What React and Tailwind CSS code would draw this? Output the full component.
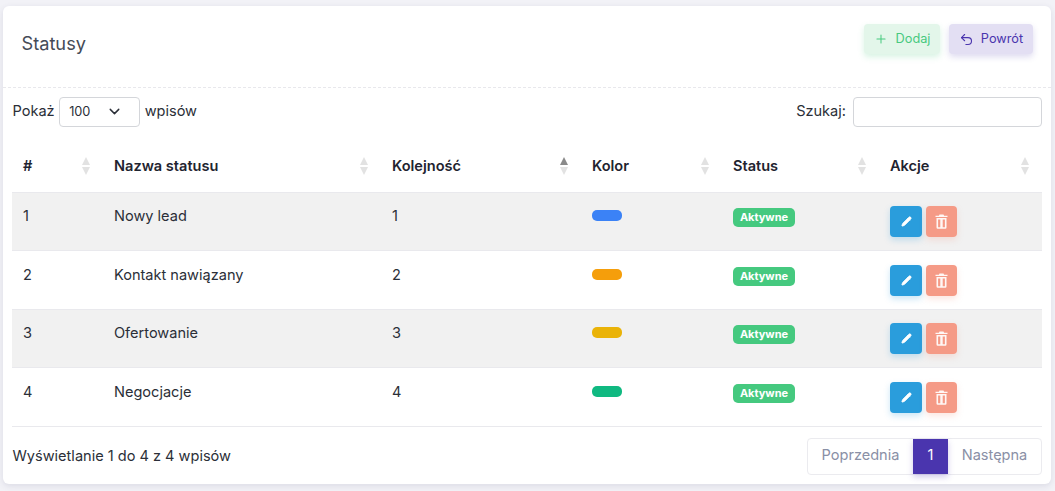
import React from 'react';
import { Plus, Undo2, ChevronDown, Pencil } from 'lucide-react';

const rows = [
  { id: 1, name: 'Nowy lead', color: '#3b82f6' },
  { id: 2, name: 'Kontakt nawiązany', color: '#f59e0b' },
  { id: 3, name: 'Ofertowanie', color: '#eab308' },
  { id: 4, name: 'Negocjacje', color: '#10b981' },
];

const SortIcon = ({ active }) => (
  <span className="absolute right-[13px] top-[15px] flex flex-col gap-[2px]">
    <span className={`w-0 h-0 border-x-[4.5px] border-x-transparent border-b-[8px] ${active ? 'border-b-[#8a8a8a]' : 'border-b-[#e2e2e2]'}`} />
    <span className="w-0 h-0 border-x-[4.5px] border-x-transparent border-t-[8px] border-t-[#e2e2e2]" />
  </span>
);

const Th = ({ children, width, active }) => (
  <th className={`relative ${width} h-[50px] pl-[11px] text-left align-middle font-semibold text-[#1f2430]`}>
    {children}
    <SortIcon active={active} />
  </th>
);

const TrashIcon = () => (
  <svg width="13" height="15" viewBox="0 0 13 15" fill="white" fillOpacity="0.92">
    <path d="M4.500 0.500h4l.6 1.200H12.500v1.300H.5V1.700h3.400L4.500 .5z" />
    <path fillRule="evenodd" d="M1.500 4h10v9.500a1.200 1.200 0 0 1-1.200 1.200H2.700a1.200 1.200 0 0 1-1.200-1.200V4zm1.600 1.400v7.800h2.200V5.400H3.100zm4.600 0v7.800h2.200V5.400H7.700z" />
  </svg>
);

export default function App() {
  return (
    <div className="h-[491px] overflow-hidden bg-[#f2f2f7] pl-[3px] pr-[4px] pt-[6px] font-['Inter',sans-serif] text-[14.56px] text-[#2b2f38]">
      <div className="h-[478px] rounded-md bg-white shadow-[0_2px_6px_rgba(60,60,100,0.12)]">
        <div className="flex h-[82px] items-start justify-between border-b border-dashed border-[#e8e8ec] pl-[18.500px] pr-[18px] pt-[18px]">
          <h2 className="pt-[10px] text-[18.2px] leading-none text-[#454b57]">Statusy</h2>
          <div className="flex gap-[9px]">
            <button className="flex h-[30px] w-[76px] items-center justify-center gap-[8px] rounded bg-[#e3f6ea] text-[12.75px] text-[#47c97f] shadow-[0_3px_6px_rgba(71,201,127,0.22)]">
              <Plus size={14} strokeWidth={1.75} />
              Dodaj
            </button>
            <button className="flex h-[30px] w-[84px] items-center justify-center gap-[7px] rounded bg-[#e3dff3] text-[12.75px] text-[#4a35ae] shadow-[0_3px_6px_rgba(74,53,174,0.18)]">
              <Undo2 size={15} strokeWidth={1.75} />
              Powrót
            </button>
          </div>
        </div>

        <div className="px-[9px]">
          <div className="flex h-[54px] items-center justify-between pb-[7px]">
            <div className="flex items-center gap-[4.500px] pl-[0.500px]">
              <span>Pokaż</span>
              <div className="flex h-[30px] w-[81px] items-center justify-between rounded border border-[#d4d6da] pl-[9px] pr-[16px] text-[12.75px]">
                100
                <ChevronDown size={17} strokeWidth={2} />
              </div>
              <span>wpisów</span>
            </div>
            <div className="flex items-center gap-[7px]">
              <span>Szukaj:</span>
              <input className="h-[30px] w-[189px] rounded border border-[#d4d6da] outline-none" />
            </div>
          </div>

          <table className="w-[1030px] table-fixed border-collapse">
            <thead>
              <tr>
                <Th width="w-[91px]">#</Th>
                <Th width="w-[278px]">Nazwa statusu</Th>
                <Th width="w-[200px]" active>Kolejność</Th>
                <Th width="w-[141px]">Kolor</Th>
                <Th width="w-[157px]">Status</Th>
                <Th width="w-[163px]">Akcje</Th>
              </tr>
            </thead>
            <tbody>
              {rows.map((row, i) => {
                const shift = i % 2 === 1 ? 'mt-[1px]' : '';
                return (
                  <tr key={row.id} className={`h-[58.5px] border-t border-[#e9e9ed] ${i % 2 === 0 ? 'bg-[#f1f1f1]' : 'bg-white'}`}>
                    <td className="pl-[11px] pt-[13px] align-top leading-[21px]"><div className={shift}>{row.id}</div></td>
                    <td className="pl-[11px] pt-[13px] align-top leading-[21px]"><div className={shift}>{row.name}</div></td>
                    <td className="pl-[11px] pt-[13px] align-top leading-[21px]"><div className={shift}>{row.id}</div></td>
                    <td className="pl-[11px] pt-[17px] align-top">
                      <div className={`h-[11px] w-[30px] rounded-[5px] ${shift}`} style={{ backgroundColor: row.color }} />
                    </td>
                    <td className="pl-[11px] pt-[15px] align-top">
                      <span className={`flex h-[19px] w-[62px] items-center justify-center rounded-[5px] bg-[#45c97f] text-[11px] font-bold text-white ${shift}`}>Aktywne</span>
                    </td>
                    <td className="pl-[11px] pt-[13px] align-top">
                      <div className={`flex gap-[4px] ${shift}`}>
                        <button className="flex h-[31px] w-[32px] items-center justify-center rounded bg-[#2a9ddc] shadow-[0_3px_6px_rgba(42,157,220,0.25)]">
                          <Pencil size={11} color="white" fill="white" />
                        </button>
                        <button className="flex h-[31px] w-[31px] items-center justify-center rounded bg-[#f59a86] shadow-[0_3px_6px_rgba(245,154,134,0.25)]">
                          <TrashIcon />
                        </button>
                      </div>
                    </td>
                  </tr>
                );
              })}
            </tbody>
          </table>

          <div className="flex h-[58px] items-center justify-between border-t border-[#e9e9ed] pt-[1px]">
            <span className="mt-[2px] pl-[0.500px]">Wyświetlanie 1 do 4 z 4 wpisów</span>
            <div className="flex h-[37px] items-stretch rounded border border-[#ebebef] text-[#8a90a6]">
              <span className="flex w-[105px] items-center justify-center">Poprzednia</span>
              <span className="flex w-[35px] items-center justify-center bg-[#4a35ae] text-white shadow-[0_3px_6px_rgba(74,53,174,0.25)]">1</span>
              <span className="flex w-[93px] items-center justify-center">Następna</span>
            </div>
          </div>
        </div>
      </div>
    </div>
  );
}
